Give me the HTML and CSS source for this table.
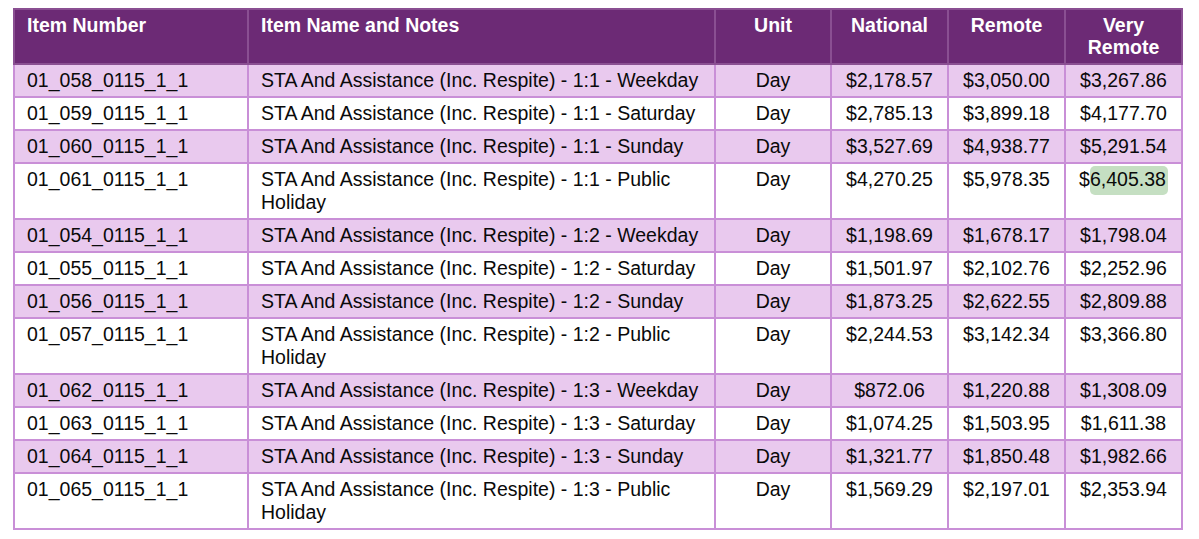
FILE: index.html
```html
<!DOCTYPE html>
<html>
<head>
<meta charset="utf-8">
<link rel="stylesheet" href="styles.css">
</head>
<body>
<table class="rates">
  <colgroup>
    <col class="c-num"><col class="c-name"><col class="c-unit"><col class="c-price"><col class="c-price"><col class="c-price">
  </colgroup>
  <thead>
    <tr>
      <th class="left">Item Number</th>
      <th class="left">Item Name and Notes</th>
      <th>Unit</th>
      <th>National</th>
      <th>Remote</th>
      <th>Very<br>Remote</th>
    </tr>
  </thead>
  <tbody>
    <tr class="alt"><td>01_058_0115_1_1</td><td>STA And Assistance (Inc. Respite) - 1:1 - Weekday</td><td class="mid">Day</td><td class="mid">$2,178.57</td><td class="mid">$3,050.00</td><td class="mid">$3,267.86</td></tr>
    <tr><td>01_059_0115_1_1</td><td>STA And Assistance (Inc. Respite) - 1:1 - Saturday</td><td class="mid">Day</td><td class="mid">$2,785.13</td><td class="mid">$3,899.18</td><td class="mid">$4,177.70</td></tr>
    <tr class="alt"><td>01_060_0115_1_1</td><td>STA And Assistance (Inc. Respite) - 1:1 - Sunday</td><td class="mid">Day</td><td class="mid">$3,527.69</td><td class="mid">$4,938.77</td><td class="mid">$5,291.54</td></tr>
    <tr><td>01_061_0115_1_1</td><td>STA And Assistance (Inc. Respite) - 1:1 - Public Holiday</td><td class="mid">Day</td><td class="mid">$4,270.25</td><td class="mid">$5,978.35</td><td class="mid">$<span class="hl">6,405.38</span></td></tr>
    <tr class="alt"><td>01_054_0115_1_1</td><td>STA And Assistance (Inc. Respite) - 1:2 - Weekday</td><td class="mid">Day</td><td class="mid">$1,198.69</td><td class="mid">$1,678.17</td><td class="mid">$1,798.04</td></tr>
    <tr><td>01_055_0115_1_1</td><td>STA And Assistance (Inc. Respite) - 1:2 - Saturday</td><td class="mid">Day</td><td class="mid">$1,501.97</td><td class="mid">$2,102.76</td><td class="mid">$2,252.96</td></tr>
    <tr class="alt"><td>01_056_0115_1_1</td><td>STA And Assistance (Inc. Respite) - 1:2 - Sunday</td><td class="mid">Day</td><td class="mid">$1,873.25</td><td class="mid">$2,622.55</td><td class="mid">$2,809.88</td></tr>
    <tr><td>01_057_0115_1_1</td><td>STA And Assistance (Inc. Respite) - 1:2 - Public Holiday</td><td class="mid">Day</td><td class="mid">$2,244.53</td><td class="mid">$3,142.34</td><td class="mid">$3,366.80</td></tr>
    <tr class="alt"><td>01_062_0115_1_1</td><td>STA And Assistance (Inc. Respite) - 1:3 - Weekday</td><td class="mid">Day</td><td class="mid">$872.06</td><td class="mid">$1,220.88</td><td class="mid">$1,308.09</td></tr>
    <tr><td>01_063_0115_1_1</td><td>STA And Assistance (Inc. Respite) - 1:3 - Saturday</td><td class="mid">Day</td><td class="mid">$1,074.25</td><td class="mid">$1,503.95</td><td class="mid">$1,611.38</td></tr>
    <tr class="alt"><td>01_064_0115_1_1</td><td>STA And Assistance (Inc. Respite) - 1:3 - Sunday</td><td class="mid">Day</td><td class="mid">$1,321.77</td><td class="mid">$1,850.48</td><td class="mid">$1,982.66</td></tr>
    <tr><td>01_065_0115_1_1</td><td>STA And Assistance (Inc. Respite) - 1:3 - Public Holiday</td><td class="mid">Day</td><td class="mid">$1,569.29</td><td class="mid">$2,197.01</td><td class="mid">$2,353.94</td></tr>
  </tbody>
</table>
</body>
</html>
```

FILE: styles.css
```css
html, body {
  margin: 0;
  padding: 0;
  background: #ffffff;
}
body {
  padding: 8px 0 0 13px;
  font-family: "Liberation Sans", Arial, sans-serif;
}
.rates {
  border-collapse: collapse;
  table-layout: fixed;
  width: 1170px;
  border: 2px solid #c98fd7;
}
.c-num { width: 234px; }
.c-name { width: 467px; }
.c-unit { width: 116px; }
.c-price { width: 117px; }

.rates th, .rates td {
  border: 2px solid #c98fd7;
  vertical-align: top;
}
.rates th {
  background: #6c2a75;
  color: #ffffff;
  font-weight: bold;
  font-size: 19.5px;
  line-height: 22px;
  text-align: center;
  padding: 4px 12px 5px 12px;
  height: 44px;
  border-color: #8a4f92;
}
.rates th.left { text-align: left; }
.rates td {
  font-size: 19.5px;
  line-height: 23px;
  color: #0a0a0a;
  padding: 4px 12px 4px 12px;
  text-align: left;
}
.rates td.mid { text-align: center; padding-left: 4px; padding-right: 4px; }
.rates tr.alt td { background: #e9c9ee; }
.hl {
  background: #c5dfc2;
  border-radius: 5px;
  padding: 2px 2px 5px 0;
}
```
